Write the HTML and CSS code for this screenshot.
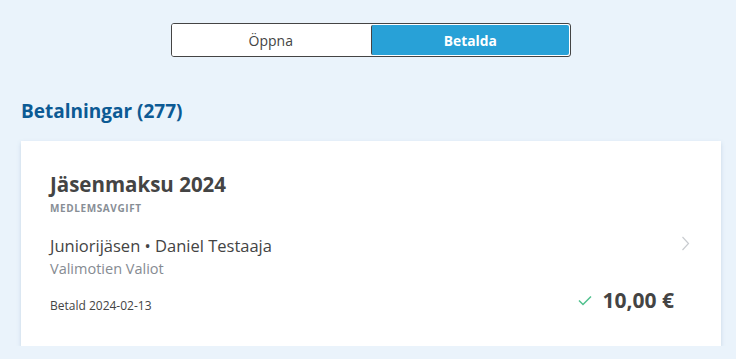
FILE: index.html
```html
<!DOCTYPE html>
<html lang="sv">
<head>
    <meta charset="UTF-8">
    <title>Betalningar</title>
    <link rel="stylesheet" href="styles.css">
</head>
<body>
    <div class="page">
        <div class="tabs">
            <button class="tab">Öppna</button>
            <button class="tab active">Betalda</button>
        </div>

        <h2 class="section-title">Betalningar (277)</h2>

        <div class="card">
            <div class="card-head">
                <h3>Jäsenmaksu 2024</h3>
                <div class="type">Medlemsavgift</div>
            </div>

            <div class="card-row">
                <div>
                    <div class="who">Juniorijäsen • Daniel Testaaja</div>
                    <div class="club">Valimotien Valiot</div>
                </div>
                <svg class="chevron" width="9" height="15" viewBox="0 0 9 15">
                    <path d="M1.5 1 L7.5 7.5 L1.5 14" fill="none" stroke="#c9ccd0" stroke-width="1.2"/>
                </svg>
            </div>

            <div class="card-foot">
                <span class="paid-date">Betald 2024-02-13</span>
                <span class="amount">
                    <svg width="14" height="11" viewBox="0 0 14 11">
                        <path d="M1 5.5 L5 9.5 L13 1.5" fill="none" stroke="#4fc08d" stroke-width="1.5"/>
                    </svg>
                    10,00 €
                </span>
            </div>
        </div>
    </div>
</body>
</html>
```

FILE: styles.css
```css
body {
    margin: 0;
    background-color: #eaf3fb;
    font-family: "Open Sans", sans-serif;
    color: #444;
}
.page {
    padding: 23px 15px 0 21px;
}
.tabs {
    display: flex;
    width: 400px;
    height: 34px;
    margin: 0 auto;
    border: 1px solid #444;
    border-radius: 3px;
    box-sizing: border-box;
    overflow: hidden;
    background: #fff;
}
.tab {
    flex: 1;
    border: none;
    background: #fff;
    font-family: "Open Sans", sans-serif;
    font-size: 14px;
    color: #444;
    padding: 0;
}
.tab.active {
    background: #28a1d7;
    color: #fff;
    font-weight: bold;
    font-size: 13.8px;
    border-left: 1px solid #444;
    border-radius: 2px;
    margin: 1px;
}
.section-title {
    margin: 42px 0 18px;
    font-size: 19px;
    color: #0c5a94;
    line-height: 24px;
}
.card {
    background: #fff;
    padding: 30px 31px 32px 29px;
    box-shadow: 0 2px 4px rgba(90, 130, 170, 0.25);
}
.card-head h3 {
    margin: 0;
    font-size: 20.5px;
    line-height: 26px;
    color: #444;
}
.type {
    margin-top: 4px;
    font-size: 10px;
    font-weight: bold;
    text-transform: uppercase;
    letter-spacing: 0.6px;
    color: #888e96;
    line-height: 14px;
}
.card-row {
    display: flex;
    justify-content: space-between;
    align-items: flex-start;
    margin-top: 22px;
}
.who {
    font-size: 16.5px;
    line-height: 18px;
}
.club {
    margin-top: 6px;
    font-size: 14.5px;
    color: #868b92;
    line-height: 16px;
}
.chevron {
    margin-top: -1px;
}
.card-foot {
    display: flex;
    justify-content: space-between;
    align-items: flex-end;
    margin-top: 9px;
}
.paid-date {
    font-size: 12px;
    line-height: 16px;
}
.amount {
    font-size: 21px;
    font-weight: bold;
    line-height: 28px;
    display: flex;
    align-items: center;
    gap: 11px;
    margin-right: 16px;
}
```
